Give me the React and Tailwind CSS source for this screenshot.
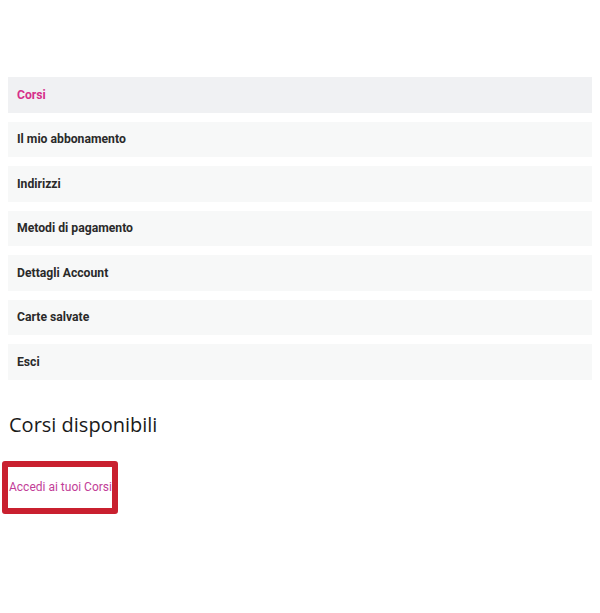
const items = [
  "Corsi",
  "Il mio abbonamento",
  "Indirizzi",
  "Metodi di pagamento",
  "Dettagli Account",
  "Carte salvate",
  "Esci",
];

export default function App() {
  return (
    <div className="w-[600px] h-[613px] bg-white font-['Roboto',sans-serif]">
      <div className="pt-[77px] px-2">
        <nav className="flex flex-col gap-[9px]">
          {items.map((label, i) => (
            <a
              key={label}
              href="#"
              className={`h-[35.5px] flex items-center px-[9px] text-[12.2px] font-bold ${
                i === 0 ? "bg-[#f0f1f3] text-[#d6308a]" : "bg-[#f7f8f8] text-[#2a2a2a]"
              }`}
            >
              {label}
            </a>
          ))}
        </nav>
        <h2 className="mt-[31px] ml-[1px] text-[20px] leading-[28px] text-[#1a1a1a] font-['Open_Sans',sans-serif]">
          Corsi disponibili
        </h2>
      </div>
      <div className="mt-[22px] ml-[2px] w-[116px] h-[53px] border-[6px] border-[#c9202f] rounded-[3px] flex items-center">
        <a href="#" className="pl-[1px] text-[12px] text-[#c23d97] whitespace-nowrap">
          Accedi ai tuoi Corsi
        </a>
      </div>
    </div>
  );
}
